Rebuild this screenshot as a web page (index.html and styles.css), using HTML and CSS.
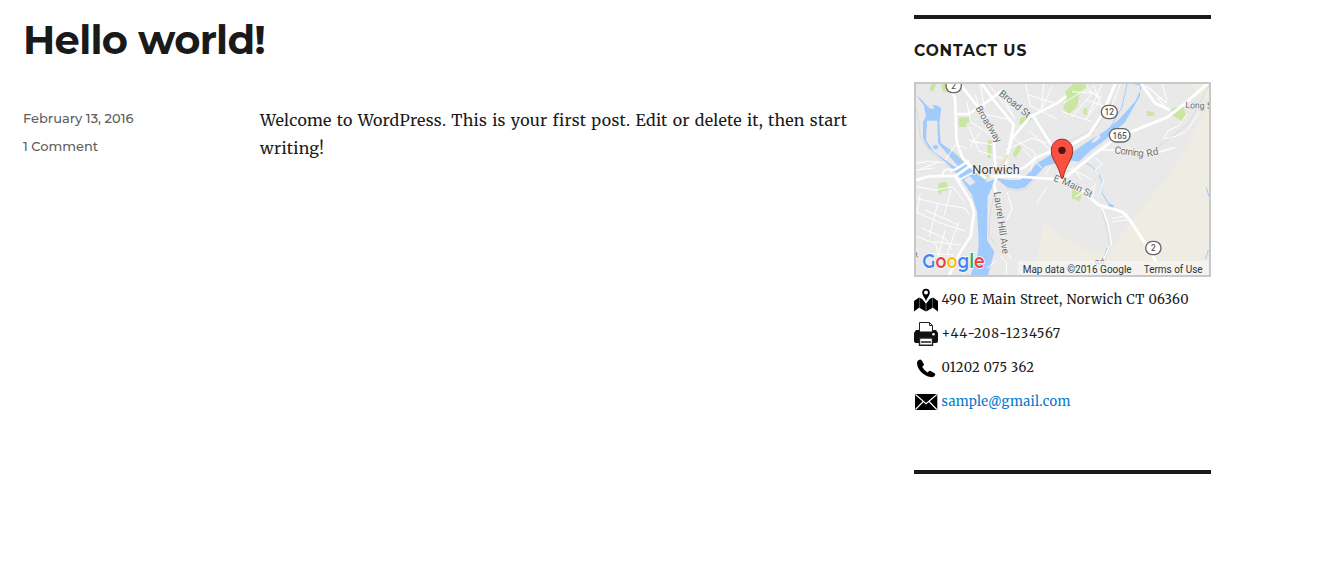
FILE: index.html
```html
<!DOCTYPE html>
<html lang="en">
<head>
<meta charset="utf-8">
<title>Hello world!</title>
<link rel="stylesheet" href="styles.css">
</head>
<body>
<div class="site">
  <main class="post">
    <h1 class="post-title"><span>Hello world!</span></h1>
    <div class="post-body">
      <div class="post-meta"><span class="date">February 13, 2016</span><span class="comments">1 Comment</span></div>
      <p class="post-text"><span class="line-one">Welcome to WordPress. This is your first post. Edit or delete it, then start</span><br><span class="line-two">writing!</span></p>
    </div>
  </main>
  <aside class="widget">
    <h2 class="widget-title"><span>CONTACT US</span></h2>
    <svg class="map" viewBox="12 12 879 573" preserveAspectRatio="none">
      <rect width="900" height="600" fill="#e9e9e9"/>
      <path fill="#efece3" d="M830 12h65v578H375l3-70 18-96 54 46 90 52 60-20 90-120 75-85 55-90 55-110 20-30z"/>
      <g fill="#cbe6a3">
        <path d="M58 12h14l-8 24-12-5zM88 12h20v27l-17-5zM140 113l35-3v16l-12 3v12h-23zM226 182l14-2-3 54h-10zM318 195l12 8-20 30-8-10zM325 115l25-12 12 14-28 17-14-3zM485 12h38v15l-22 18-5 35-25 22-18-18 12-30-5-20zM515 85h11v20l-12-2zM780 85l35-8 6 28-10 20-35-22zM705 92l20 5 4 12-25-2zM80 309l24-4 5 25-17 3-10 12-5-18zM480 328l31 9-8 28-23-10zM190 286h42l-10 19-20-4zM118 210l40 34-5 10z"/>
      </g>
      <g fill="#a2cbfd">
        <path fill-rule="evenodd" d="M12 45L30 60 52 85 66 87 62 75 77 77 88 85 82 130 86 188 125 217 170 262 200 285 225 306 252 296 227 350 225 480 247 515 228 585H176L198 520 200 480 195 395 180 345 150 300 110 255 50 205 33 175V125L42 108 35 75zM45 122H76L78 190 140 260 128 260 65 215 42 180zM156 299L172 288 190 307 174 317z"/>
        <path d="M66 195l10 1 3 8-8 5-9-6z"/>
        <path d="M664 12h20v35l-45 80-60 53-42 31-37 34-30-5-40 10-30 8-30 32-30 32-25 6-30-6-35-28 40 6 35 0 25-20 25-30 45-28 50 3 50-35 60-38 40-33 50-55 20-45z"/>
        <path d="M590 370l16 6-4 15-13-3z"/>
      </g>
      <path fill="#e9e9e9" d="M538 190l5-10 18-17 5 8-15 14z"/>
      <path fill="none" stroke="#a2cbfd" stroke-width="3" d="M515 245l25 14 20 22 12 30-3 26 25 40M645 12l-15 70-35 60M585 505l-8 25M883 322l8 28M889 510l-8 28"/>
      <path fill="none" stroke="#fff" stroke-width="3" stroke-linejoin="round" d="M12 250l38-6 50 5M12 270l55-6M20 270l60-25M100 240l30-45 35 10M165 65l10 60 70 45M190 45l15 55 95 20M205 12l12 72M230 12l80 105M270 45l35 65M340 12l15 65 80 40M350 45l80 25M395 12l-8 85M420 20l-30 65M280 210l80-35 45 15M305 175l65 45-15 55M170 140l30 72 90 30M175 182l65 12M205 155l-30 45M350 150l70 65M170 180l30 10M330 205l60 60M455 70l65-42 50 25M520 15l45 45-45 60M480 35l70 5M450 95l90 30M480 110l60-70M545 15l35 100M570 12l-40 90M525 60l55 20M610 12l-30 75M625 12l-25 65M12 320l60 10 50-10 35 45M12 355l65 15-25 100M25 340l-10 60M75 370l85 15 12 20M40 390l100 45M12 395l75 35 72 23M30 445l70 30 20 35M15 470l55 20 20 65M65 485l80 10M50 520l75 5M100 450l-25 90M140 425l-35 100M117 330l-20 75M285 335l15 50-15 35M265 530l18 15v40M270 510l30 25M225 565l30-25M405 320l-30 50M470 265l35 15 35 20M550 235l22 15-22 20 10 15M755 175l12-22 32-15 25-35M755 177l37-8 30-15 40-55M750 12l15 50M600 415l30-5 18-10M600 425l45-5M550 310l-10 45M575 300l-10 40M490 350l55-30M415 260l-15 25M480 260l30 40"/>
      <path fill="none" stroke="#fff" stroke-width="4" d="M570 381l18 50 10 60-25 50-10 45M565 210l120 2 40 10 65-20M735 52l30 35M700 15l65 55"/>
      <path fill="none" stroke="#bdbdbd" stroke-width="1" d="M14 85l12 90 25 38 75 62M455 192l100-50 45-80M570 394l16 55 8 52-20 55M245 350l-10 50-5 65 20 30M715 220l115-90 62-115M285 325l30 8 30-8 35-38"/>
      <g fill="none" stroke="#fff" stroke-linecap="round" stroke-linejoin="round">
        <path stroke-width="8" d="M112 10l17 45 5 130 18 50 40 38 28 20M135 102h35l60-40 37-28M150 20l55 70 40 75 5 95M210 12l30 42 65 80-20 100-10 45M285 230l15-55 55-65 80-40 25-20M365 110l50 80 30 30M12 300l40-11 80-2 40-28M240 289l70 0 140 10M254 290l-8 25 5 20M280 290l60-30 35-28 90-38M130 288l48 80 8 30-10 70-35 55-35 75"/>
        <path stroke-width="9" d="M450 210l80-45 40-60 30-70 10-25M450 300l100-80 65-48 75-30 75-30 50-38 76-67M450 298l45 22 65 55 50 14 22 8 22 24 52 78 28 50M690 15l40 55 40 18"/>
        <path stroke-width="5" d="M92 282q5-20 38-12l35-22 20 18M115 275l55-32M140 300l48-25"/>
      </g>
      <path fill="none" stroke="#f2dfc8" stroke-width="9" d="M288 225l-18 28-15 10"/>
      <g class="map-label">
        <text transform="translate(259 44) rotate(39)" font-size="30" textLength="112">Broad St</text>
        <text transform="translate(190 85) rotate(59)" font-size="29" textLength="123">Broadway</text>
        <text x="181" y="283" font-size="38" textLength="142" fill="#443c30">Norwich</text>
        <text transform="translate(607 220) rotate(7)" font-size="30" textLength="88">Corning</text>
        <text transform="translate(706 231) rotate(-13)" font-size="30" textLength="36">Rd</text>
        <text transform="translate(820 84) rotate(2)" font-size="27" textLength="58">Long</text>
        <text transform="translate(885 86)" font-size="27">S</text>
        <text transform="translate(423 302) rotate(20)" font-size="28" textLength="20">E</text>
        <text transform="translate(448 310) rotate(26)" font-size="29" textLength="98">Main St</text>
        <text transform="translate(245 337) rotate(82)" font-size="30" textLength="188">Laurel Hill Ave</text>
        <text transform="translate(552 560) rotate(-20)" font-size="25">Rd</text>
        <text transform="translate(12 533) rotate(-15)" font-size="25">t</text>
      </g>
      <g class="route">
        <rect x="102" y="-4" width="46" height="42" rx="20"/><text x="125" y="27">2</text>
        <rect x="568" y="76" width="48" height="40" rx="20"/><text x="592" y="106">12</text>
        <rect x="592" y="146" width="62" height="40" rx="20"/><text x="623" y="176">165</text>
        <rect x="701" y="484" width="46" height="40" rx="20"/><text x="724" y="514">2</text>
      </g>
      <path d="M418 212c0-46 64-46 64 0 0 29-21 40-29 83h-5c-8-43-30-54-30-83z" fill="#f9503f" stroke="#9c3028" stroke-width="3"/>
      <circle cx="450" cy="211" r="11" fill="#501411"/>
      <rect x="318" y="543" width="573" height="42" fill="#f5f5f5" opacity=".78"/>
      <text class="wordmark" x="31" y="564" textLength="187" lengthAdjust="spacingAndGlyphs"><tspan fill="#4285f4">G</tspan><tspan fill="#ea4335">o</tspan><tspan fill="#fbbc05">o</tspan><tspan fill="#4285f4">g</tspan><tspan fill="#34a853">l</tspan><tspan fill="#ea4335">e</tspan></text>
      <g class="credit"><text x="332" y="579" textLength="327">Map data ©2016 Google</text><text x="695" y="579" textLength="177">Terms of Use</text></g>
    </svg>
    <ul class="contacts">
      <li>
        <svg class="icon" viewBox="0 0 24 24"><path fill-rule="evenodd" d="M12 13C11 10 8.200 7.500 8.200 4.500a3.800 3.800 0 0 1 7.600 0C15.800 7.500 13 10 12 13zM12 2.400a2 2 0 1 0 0 4 2 2 0 0 0 0-4z"/><path d="M0 13l5-3.500v10.300l-5 3.700zM5.300 9.500l3.100 1.700 3.400 4.300v8L5.300 19.700zM12.200 15.500l3.500-4.500 3-1.500v10.200l-6.500 3.800zM19 9.500l5 3.500v10.500l-5-3.700z"/></svg>
        <span class="address">490 E Main Street, Norwich CT 06360</span></li>
      <li>
        <svg class="icon" viewBox="0 0 24 24"><path fill="#111" d="M2 8h20l2 3v8q0 2-2 2H2q-2 0-2-2v-8z"/><path fill="#fff" stroke="#222" d="M5.500.5h10l3 3v7h-13z"/><path fill="#fff" stroke="#222" stroke-width="1.400" d="M5.500 16h13v7.300h-13z"/><path fill="none" stroke="#222" d="M15.500.5v3h3"/><path stroke="#222" stroke-width="1.500" d="M7 20h10"/><path fill="#111" d="M3 9.500h18V13H3z"/><circle cx="19.500" cy="12.300" r="1.300" fill="#fff"/></svg>
        <span class="fax">+44-208-1234567</span></li>
      <li>
        <svg class="icon" viewBox="0 0 24 24"><path d="M3 6.500Q3.500 4 6 3.500q1 0 1.600.8l2.200 3.600q.5.900-.3 1.700L8.200 10.700q1.700 3.500 5.300 5.700l1.600-1.300q.7-.6 1.600-.1l3.900 2.300q1 .7.600 1.600-1.200 2.500-4.500 2.200C9.500 20.200 2.800 13 3 6.500z"/></svg>
        <span class="phone">01202 075 362</span></li>
      <li>
        <svg class="icon" viewBox="0 0 24 24"><path d="M1 4h22.300v16H1z"/><path fill="none" stroke="#fff" stroke-width="1.100" d="M1.500 4.500l10.600 9.200 10.700-9.200M1.500 19.500l7.700-8M22.800 19.500l-7.700-8"/></svg>
        <a class="email" href="#">sample@gmail.com</a></li>
    </ul>
  </aside>
</div>
</body>
</html>
```
FILE: styles.css
```css
* { box-sizing: border-box; }
body { margin: 0; background: #fff; color: #1a1a1a; font-family: Merriweather, "DejaVu Serif Condensed", "DejaVu Serif", serif; }
.site { display: flex; height: 570px; padding: 15px 131px 0 23px; justify-content: space-between; }
.post { width: 830px; }
.post-title { margin: 0; height: 89px; font: 700 40px/50px Montserrat, Inter, sans-serif; letter-spacing: -.7px; white-space: nowrap; }
.post-body { display: flex; }
.post-meta { display: flex; flex-direction: column; align-items: flex-start; width: 237px; color: #606060; font: 500 13px/28px Montserrat, Inter, sans-serif; }
.post-text { margin: 0; padding-top: 2px; font-size: 16px; line-height: 28px; letter-spacing: .25px; word-spacing: 1.050px; white-space: nowrap; }
.widget { width: 297px; height: 459px; border: solid #1a1a1a; border-width: 4px 0; }
.widget-title { margin: 0; height: 63px; padding-top: 21px; font: 700 15.500px/21px Montserrat, Inter, sans-serif; letter-spacing: .9px; }
.map { display: block; width: 297px; height: 195px; border: 2px solid #c8c8c8; }
.map-label { font-family: Roboto, sans-serif; fill: #6b6b6b; stroke: #f4f4f4; stroke-width: 4px; paint-order: stroke; }
.route rect { fill: #fff; stroke: #666; stroke-width: 4px; }
.route text { font: 500 25px Roboto, sans-serif; fill: #555; text-anchor: middle; }
.wordmark { font: 600 60px Montserrat, Lato, sans-serif; stroke: #fff; stroke-width: 4px; paint-order: stroke; }
.credit { font: 30px Roboto, sans-serif; fill: #333; }
.contacts { display: flex; flex-direction: column; gap: 10px; margin: 0; padding: 11px 0 0; list-style: none; font-size: 13px; line-height: 24px; white-space: nowrap; }
.contacts li { display: flex; gap: 3.500px; height: 24px; }
.icon { width: 24px; height: 24px; flex: none; }
.address { letter-spacing: .3px; word-spacing: .5px; }
.fax { letter-spacing: .9px; }
.phone { letter-spacing: .37px; }
.email { color: #007acc; letter-spacing: .32px; text-decoration: none; }
```
